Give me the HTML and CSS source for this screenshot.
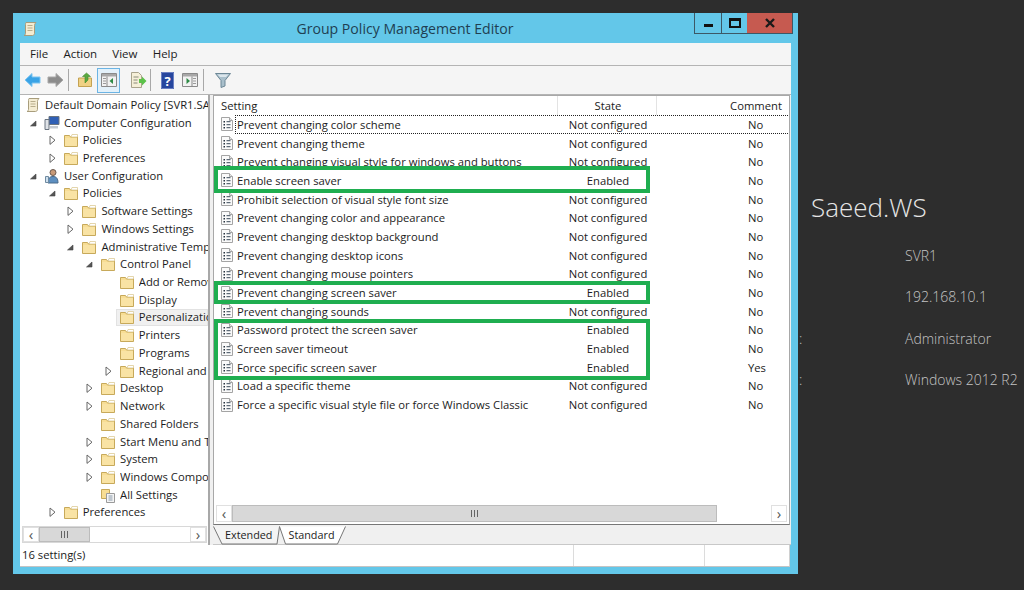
FILE: index.html
```html
<!DOCTYPE html>
<html lang="en">
<head>
    <meta charset="UTF-8">
    <meta name="viewport" content="width=device-width, initial-scale=1.0">
    <title>Group Policy Management Editor</title>
    <link rel="stylesheet" href="styles.css">
</head>
<body>
    <svg class="defs" width="0" height="0">
        <defs>
            <symbol id="folder" viewBox="0 0 16 16">
                <path d="M1.5 3.5h5l1 1.5h7v9.500h-13z" fill="#f7dd94" stroke="#c7a95a"/>
                <path d="M9 2.500h5.500v2.500H8z" fill="#fff" stroke="#d8c48a" stroke-width=".7"/>
                <path d="M2 6h12v8H2z" fill="#f9e3a4"/>
            </symbol>
            <symbol id="open" viewBox="0 0 12 12">
                <path d="M9 4v5H3.500z" fill="#555" stroke="#444" stroke-width=".6"/>
            </symbol>
            <symbol id="closed" viewBox="0 0 12 12">
                <path d="M4 2l5 4.200-5 4.200z" fill="#fff" stroke="#666"/>
            </symbol>
            <symbol id="setting" viewBox="0 0 14 16">
                <path d="M1.500 1.500h8l3 3v10h-11z" fill="#fafafa" stroke="#a4a4a4"/>
                <path d="M9.500 1.500v3h3" fill="#e4e4e4" stroke="#a4a4a4"/>
                <path d="M3.500 5h1.500v1.500H3.500zM3.500 8h1.500v1.500H3.500zM3.500 11h1.500v1.500H3.500z" fill="#26323e"/>
                <path d="M6.500 5.700h4M6.500 8.700h4M6.500 11.700h4" stroke="#3a4a5a"/>
            </symbol>
            <symbol id="scroll" viewBox="0 0 16 16">
                <path d="M4 1.500h10c-1 1-1.500 2-1.500 3v8c0 1-1 2-2 2H2c1-.5 1.500-1 1.500-2v-9c0-1 .2-1.500.5-2z" fill="#f4ecd2" stroke="#a89d7c"/>
                <path d="M5.500 4.500h5M5.500 7h5M5.500 9.500h5" stroke="#b8ad8c"/>
            </symbol>
            <symbol id="computer" viewBox="0 0 16 16">
                <path d="M5 1.500h10v8H5z" fill="#2f5fb5" stroke="#6a7480"/>
                <path d="M1 4.500h4v10H1z" fill="#dfe3e8" stroke="#6a7480"/>
                <path d="M6 11h8v2.500H6z" fill="#c4cad2"/>
            </symbol>
            <symbol id="user" viewBox="0 0 16 16">
                <circle cx="9" cy="4.500" r="3" fill="#c89a78" stroke="#6a5a50"/>
                <path d="M4 15c0-5 2-6.500 5-6.500s5 1.500 5 6.500z" fill="#5d8fc0" stroke="#4a6a8a"/>
                <path d="M1.500 8.500h3v6h-3z" fill="#cfe0ee" stroke="#6f8aa0"/>
            </symbol>
            <symbol id="allset" viewBox="0 0 16 16">
                <path d="M1.500 2.500h8v9h-8z" fill="#f7dd94" stroke="#c7a95a"/>
                <path d="M6.500 6.500h8v9h-8z" fill="#f4f4f4" stroke="#9a9a9a"/>
                <path d="M8.500 9h4M8.500 11h4M8.500 13h4" stroke="#8a9aaa"/>
            </symbol>
        </defs>
    </svg>

    <div class="desktop">
        <div class="window">
            <div class="titlebar">
                <svg class="title-icon"><use href="#scroll"/></svg>
                <div class="title">Group Policy Management Editor</div>
                <div class="controls">
                    <div class="ctl"><span class="ctl-min"></span></div>
                    <div class="ctl ctl-narrow"><span class="ctl-max"></span></div>
                    <div class="ctl ctl-close">
                        <svg width="12" height="10" viewBox="0 0 12 10"><path d="M2 1l8 8M10 1l-8 8" stroke="#1a1a1a" stroke-width="2.400"/></svg>
                    </div>
                </div>
            </div>

            <div class="menubar">
                <span>File</span>
                <span>Action</span>
                <span>View</span>
                <span>Help</span>
            </div>

            <div class="toolbar">
                <svg class="tool" width="17" height="16" viewBox="0 0 17 16"><path d="M8 1.500v3.500h8v6H8v3.500L1 8z" fill="#39a3e6" stroke="#7cc4f0"/></svg>
                <svg class="tool" width="17" height="16" viewBox="0 0 17 16"><path d="M9 1.500v3.500H1v6h8v3.500L16 8z" fill="#8c8c8c" stroke="#a8a8a8"/></svg>
                <div class="tool-sep"></div>
                <svg class="tool tool-up" width="16" height="16" viewBox="0 0 16 16">
                    <path d="M1.500 6h13v8.500h-13z" fill="#f0d184" stroke="#c4a252"/>
                    <path d="M8 11V4.500H5.500L9.500 1l4 3.500H11V8z" fill="#5aa83e" stroke="#3f8a2c" stroke-width=".6"/>
                </svg>
                <div class="tool-btn">
                    <svg width="16" height="14" viewBox="0 0 16 14">
                        <path d="M.5.500h15v13H.5z" fill="#f2f2f2" stroke="#8a8a8a"/>
                        <path d="M1 1h14v2.500H1z" fill="#a8a8a8"/>
                        <path d="M6 3.500v10" stroke="#8a8a8a"/>
                        <path d="M2 5.500h3M2 8h3M2 10.500h3" stroke="#9a9a9a"/>
                        <path d="M12 5v6L8.500 8z" fill="#2e8b46"/>
                    </svg>
                </div>
                <svg class="tool tool-doc" width="17" height="16" viewBox="0 0 17 16">
                    <path d="M1.500 .5h7l3 3v12h-10z" fill="#f5efd8" stroke="#a9a38c"/>
                    <path d="M3.500 5h5M3.500 8h4M3.500 11h4" stroke="#8a8a7a"/>
                    <path d="M9 7h3V4.500L16.500 9 12 13.500V11H9z" fill="#5cc24a"/>
                </svg>
                <div class="tool-sep"></div>
                <svg class="tool tool-help" width="13" height="17" viewBox="0 0 13 17">
                    <path d="M0 0h13v17H0z" fill="#26469e"/>
                    <path d="M.5 .5h12v16H.5z" fill="none" stroke="#6b80c2"/>
                    <text x="6.500" y="13.500" class="help-q">?</text>
                </svg>
                <svg class="tool tool-pane" width="16" height="14" viewBox="0 0 16 14">
                    <path d="M.5.500h15v13H.5z" fill="#f2f2f2" stroke="#8a8a8a"/>
                    <path d="M1 1h14v2.500H1z" fill="#a8a8a8"/>
                    <path d="M10 3.500v10" stroke="#8a8a8a"/>
                    <path d="M11 5.500h3M11 8h3M11 10.500h3" stroke="#9a9a9a"/>
                    <path d="M4.500 5v6L8 8z" fill="#2e8b46"/>
                </svg>
                <div class="tool-sep"></div>
                <svg class="tool tool-filter" width="16" height="16" viewBox="0 0 16 16">
                    <path d="M.5 1.500h15L10 8.500v5.500l-4 1.500v-7z" fill="#a9bfcb" stroke="#6d8796"/>
                    <path d="M2.500 2.500h11L11 5H5z" fill="#dbe6ec"/>
                </svg>
            </div>

            <div class="panes">
                <div class="tree-pane">
                    <div class="tree">
                        <div class="node l0"><svg class="ico"><use href="#scroll"/></svg><span>Default Domain Policy [SVR1.SAEED.WS] Policy</span></div>
                        <div class="node l1"><svg class="tw"><use href="#open"/></svg><svg class="ico"><use href="#computer"/></svg><span>Computer Configuration</span></div>
                        <div class="node l2"><svg class="tw"><use href="#closed"/></svg><svg class="ico"><use href="#folder"/></svg><span>Policies</span></div>
                        <div class="node l2"><svg class="tw"><use href="#closed"/></svg><svg class="ico"><use href="#folder"/></svg><span>Preferences</span></div>
                        <div class="node l1"><svg class="tw"><use href="#open"/></svg><svg class="ico"><use href="#user"/></svg><span>User Configuration</span></div>
                        <div class="node l2"><svg class="tw"><use href="#open"/></svg><svg class="ico"><use href="#folder"/></svg><span>Policies</span></div>
                        <div class="node l3"><svg class="tw"><use href="#closed"/></svg><svg class="ico"><use href="#folder"/></svg><span>Software Settings</span></div>
                        <div class="node l3"><svg class="tw"><use href="#closed"/></svg><svg class="ico"><use href="#folder"/></svg><span>Windows Settings</span></div>
                        <div class="node l3"><svg class="tw"><use href="#open"/></svg><svg class="ico"><use href="#folder"/></svg><span>Administrative Templates</span></div>
                        <div class="node l4"><svg class="tw"><use href="#open"/></svg><svg class="ico"><use href="#folder"/></svg><span>Control Panel</span></div>
                        <div class="node l5"><svg class="tw"></svg><svg class="ico"><use href="#folder"/></svg><span>Add or Remove Programs</span></div>
                        <div class="node l5"><svg class="tw"></svg><svg class="ico"><use href="#folder"/></svg><span>Display</span></div>
                        <div class="node l5 selected"><svg class="tw"></svg><svg class="ico"><use href="#folder"/></svg><span>Personalization</span></div>
                        <div class="node l5"><svg class="tw"></svg><svg class="ico"><use href="#folder"/></svg><span>Printers</span></div>
                        <div class="node l5"><svg class="tw"></svg><svg class="ico"><use href="#folder"/></svg><span>Programs</span></div>
                        <div class="node l5"><svg class="tw"><use href="#closed"/></svg><svg class="ico"><use href="#folder"/></svg><span>Regional and Language</span></div>
                        <div class="node l4"><svg class="tw"><use href="#closed"/></svg><svg class="ico"><use href="#folder"/></svg><span>Desktop</span></div>
                        <div class="node l4"><svg class="tw"><use href="#closed"/></svg><svg class="ico"><use href="#folder"/></svg><span>Network</span></div>
                        <div class="node l4"><svg class="tw"></svg><svg class="ico"><use href="#folder"/></svg><span>Shared Folders</span></div>
                        <div class="node l4"><svg class="tw"><use href="#closed"/></svg><svg class="ico"><use href="#folder"/></svg><span>Start Menu and Taskbar</span></div>
                        <div class="node l4"><svg class="tw"><use href="#closed"/></svg><svg class="ico"><use href="#folder"/></svg><span>System</span></div>
                        <div class="node l4"><svg class="tw"><use href="#closed"/></svg><svg class="ico"><use href="#folder"/></svg><span>Windows Components</span></div>
                        <div class="node l4"><svg class="tw"></svg><svg class="ico"><use href="#allset"/></svg><span>All Settings</span></div>
                        <div class="node l2"><svg class="tw"><use href="#closed"/></svg><svg class="ico"><use href="#folder"/></svg><span>Preferences</span></div>
                    </div>
                    <div class="hscroll tree-scroll">
                        <div class="sb-btn">&lsaquo;</div>
                        <div class="sb-thumb tree-thumb"><span class="grip"></span></div>
                        <div class="sb-track"></div>
                        <div class="sb-btn">&rsaquo;</div>
                    </div>
                </div>

                <div class="list-side">
                    <div class="list-pane">
                        <div class="list-head">
                            <div>Setting</div>
                            <div class="head-state">State</div>
                            <div class="head-comment">Comment</div>
                        </div>
                        <div class="list-rows">
                            <div class="row focused"><div class="name"><svg class="doc"><use href="#setting"/></svg><span>Prevent changing color scheme</span></div><div class="state">Not configured</div><div class="comment">No</div></div>
                            <div class="row"><div class="name"><svg class="doc"><use href="#setting"/></svg><span>Prevent changing theme</span></div><div class="state">Not configured</div><div class="comment">No</div></div>
                            <div class="row"><div class="name"><svg class="doc"><use href="#setting"/></svg><span>Prevent changing visual style for windows and buttons</span></div><div class="state">Not configured</div><div class="comment">No</div></div>
                            <div class="row"><div class="name"><svg class="doc"><use href="#setting"/></svg><span>Enable screen saver</span></div><div class="state">Enabled</div><div class="comment">No</div></div>
                            <div class="row"><div class="name"><svg class="doc"><use href="#setting"/></svg><span>Prohibit selection of visual style font size</span></div><div class="state">Not configured</div><div class="comment">No</div></div>
                            <div class="row"><div class="name"><svg class="doc"><use href="#setting"/></svg><span>Prevent changing color and appearance</span></div><div class="state">Not configured</div><div class="comment">No</div></div>
                            <div class="row"><div class="name"><svg class="doc"><use href="#setting"/></svg><span>Prevent changing desktop background</span></div><div class="state">Not configured</div><div class="comment">No</div></div>
                            <div class="row"><div class="name"><svg class="doc"><use href="#setting"/></svg><span>Prevent changing desktop icons</span></div><div class="state">Not configured</div><div class="comment">No</div></div>
                            <div class="row"><div class="name"><svg class="doc"><use href="#setting"/></svg><span>Prevent changing mouse pointers</span></div><div class="state">Not configured</div><div class="comment">No</div></div>
                            <div class="row"><div class="name"><svg class="doc"><use href="#setting"/></svg><span>Prevent changing screen saver</span></div><div class="state">Enabled</div><div class="comment">No</div></div>
                            <div class="row"><div class="name"><svg class="doc"><use href="#setting"/></svg><span>Prevent changing sounds</span></div><div class="state">Not configured</div><div class="comment">No</div></div>
                            <div class="row"><div class="name"><svg class="doc"><use href="#setting"/></svg><span>Password protect the screen saver</span></div><div class="state">Enabled</div><div class="comment">No</div></div>
                            <div class="row"><div class="name"><svg class="doc"><use href="#setting"/></svg><span>Screen saver timeout</span></div><div class="state">Enabled</div><div class="comment">No</div></div>
                            <div class="row"><div class="name"><svg class="doc"><use href="#setting"/></svg><span>Force specific screen saver</span></div><div class="state">Enabled</div><div class="comment">Yes</div></div>
                            <div class="row"><div class="name"><svg class="doc"><use href="#setting"/></svg><span>Load a specific theme</span></div><div class="state">Not configured</div><div class="comment">No</div></div>
                            <div class="row"><div class="name"><svg class="doc"><use href="#setting"/></svg><span>Force a specific visual style file or force Windows Classic</span></div><div class="state">Not configured</div><div class="comment">No</div></div>
                        </div>
                        <div class="hscroll list-scroll">
                            <div class="sb-btn">&lsaquo;</div>
                            <div class="sb-thumb list-thumb"><span class="grip"></span></div>
                            <div class="sb-track"></div>
                            <div class="sb-btn">&rsaquo;</div>
                        </div>
                    </div>
                    <div class="tabs">
                        <svg class="tab-shapes" width="140" height="20" viewBox="0 0 140 20">
                            <path d="M.5 1.500l8.500 17.500h55l2.500-17.500" fill="#f4f4f4" stroke="#777"/>
                            <path d="M66.500 1.500l6 17.500h52l8-17.500" fill="#fff" stroke="#777"/>
                        </svg>
                        <div class="tab">Extended</div>
                        <div class="tab">Standard</div>
                    </div>
                    <!-- highlights drawn on top of the list -->
                    <div class="mark mark-a"></div>
                    <div class="mark mark-b"></div>
                    <div class="mark mark-c"></div>
                </div>
            </div>

            <div class="statusbar">
                <div class="status-main">16 setting(s)</div>
                <div class="status-mid"></div>
                <div class="status-end"></div>
            </div>
        </div>

        <div class="info">
            <div class="info-name">Saeed.WS</div>
            <div class="info-row"><span></span><span>SVR1</span></div>
            <div class="info-row"><span></span><span>192.168.10.1</span></div>
            <div class="info-row"><span>:</span><span>Administrator</span></div>
            <div class="info-row"><span>:</span><span>Windows 2012 R2</span></div>
        </div>
    </div>
</body>
</html>
```

FILE: styles.css
```css
* {
    box-sizing: border-box;
}

html, body {
    height: 100%;
}

body {
    margin: 0;
    background-color: #2d2d2d;
    font-family: "Open Sans", "Noto Sans", sans-serif;
    font-size: 11.25px;
    color: #1c1c1c;
    overflow: hidden;
}

.defs {
    position: absolute;
}

.desktop {
    display: flex;
    padding: 13px 0 0 13px;
}

/* Window frame */
.window {
    display: flex;
    flex-direction: column;
    flex: none;
    width: 785px;
    height: 561px;
    padding: 0 7px 7px;
    background-color: #63c7e9;
}

.titlebar {
    display: grid;
    grid-template-columns: 1fr auto 1fr;
    height: 30px;
    flex: none;
}

.title-icon {
    width: 16px;
    height: 16px;
    margin: 8px 0 0 2px;
}

.title {
    padding: 6px 1px 0 0;
    font-size: 14.1px;
    color: #1f3f52;
}

.controls {
    display: flex;
    justify-self: end;
    height: 21px;
    margin-right: -2px;
    border: 1px solid #3c5866;
    border-top: none;
}

.ctl {
    display: flex;
    align-items: center;
    justify-content: center;
    width: 27px;
    border-right: 1px solid #3c5866;
}

.ctl-narrow {
    width: 25px;
    border-right: none;
}

.ctl-close {
    width: 45px;
    background-color: #c65a50;
    border-right: none;
}

.ctl-min {
    width: 9px;
    height: 3px;
    margin-top: 5px;
    background-color: #111;
}

.ctl-max {
    width: 12px;
    height: 10px;
    border: 2px solid #111;
    border-top-width: 3px;
}

.menubar {
    display: flex;
    flex: none;
    gap: 15.2px;
    align-items: center;
    height: 23px;
    padding: 0 0 2px 10px;
    font-size: 11.5px;
    background-color: #f5f5f5;
    border-bottom: 1px solid #b4b4b4;
}

.toolbar {
    display: flex;
    flex: none;
    align-items: center;
    height: 29px;
    padding-left: 4px;
    background-color: #f5f5f5;
    border-bottom: 1px solid #b4b4b4;
}

.tool {
    flex: none;
    margin-right: 6px;
}

.tool-sep {
    width: 1px;
    height: 22px;
    margin: 0 10px 0 -2px;
    background-color: #a8a8a8;
}

.tool-up {
    margin-left: -2px;
}

.tool-btn {
    display: flex;
    align-items: center;
    justify-content: center;
    width: 23px;
    height: 25px;
    margin: 0 10px 0 -2px;
    background-color: #e3f1fa;
    border: 1px solid #6cb4e4;
}

.tool-doc {
    margin-right: 5px;
}

.tool-help {
    margin-right: 8px;
}

.tool-pane {
    margin-right: 7px;
}

.tool-filter {
    margin-left: 1px;
}

.help-q {
    fill: #fff;
    font-size: 13px;
    font-weight: 700;
    text-anchor: middle;
}

/* Panes */
.panes {
    display: flex;
    flex: 1;
    min-height: 0;
    gap: 3px;
    background-color: #f0f0f0;
}

.tree-pane {
    display: flex;
    flex-direction: column;
    flex: none;
    width: 190px;
    background-color: #fff;
    border-right: 2px solid #a8a8a8;
}

.tree {
    flex: 1;
    min-height: 0;
    padding-top: 1px;
    overflow: hidden;
}

.node {
    display: flex;
    align-items: center;
    height: 17.73px;
    white-space: nowrap;
}

.node span {
    flex: 1;
    min-width: 0;
    margin: 0 0 1px 4px;
    overflow: hidden;
}

.l0 { padding-left: 5px; }
.l1 { padding-left: 7px; }
.l2 { padding-left: 25.7px; }
.l3 { padding-left: 44.4px; }
.l4 { padding-left: 63.1px; }
.l5 { padding-left: 81.8px; }

.tw {
    flex: none;
    width: 12px;
    height: 12px;
    margin-right: 5px;
}

.ico {
    flex: none;
    width: 16px;
    height: 16px;
}

.selected {
    position: relative;
}

/* selected row only paints from its icon on */
.selected::before {
    content: "";
    position: absolute;
    top: 0;
    bottom: 0;
    left: 96px;
    right: 0;
    background-color: #f0f0f0;
    border: 1px solid #e2e2e2;
}

.selected svg,
.selected span {
    position: relative;
}

/* Scrollbars */
.hscroll {
    display: flex;
    flex: none;
    background-color: #fff;
}

.tree-scroll {
    height: 17px;
    margin: 0 1px 2px 2px;
    border: 1px solid #d8d8d8;
}

.list-scroll {
    height: 17px;
    margin: 0 2px 2px 2px;
}

.sb-btn {
    display: flex;
    align-items: center;
    justify-content: center;
    width: 16px;
    font-size: 15px;
    line-height: 1;
    color: #555;
    background-color: #fff;
    border: 1px solid #e0e0e0;
}

.sb-thumb {
    display: flex;
    align-items: center;
    justify-content: center;
    background-color: #d8d8d8;
    border: 1px solid #bcbcbc;
}

.tree-thumb {
    width: 51px;
}

.list-thumb {
    width: 485px;
}

.sb-track {
    flex: 1;
}

.grip {
    width: 7px;
    height: 7px;
    background: repeating-linear-gradient(90deg, #666 0 1px, transparent 1px 3px);
}

/* Settings list */
.list-side {
    position: relative;
    display: flex;
    flex-direction: column;
    flex: 1;
}

.list-pane {
    display: flex;
    flex-direction: column;
    flex: 1;
    min-height: 0;
    margin-right: 1px;
    background-color: #fff;
    border: 1px solid #a8a8a8;
    border-bottom-color: #777;
}

.list-head {
    display: grid;
    grid-template-columns: 344px 99px 1fr;
    flex: none;
    height: 19px;
    line-height: 19px;
}

.list-head > div {
    padding-left: 7px;
    border-right: 1px solid #e3e3e3;
}

.list-head .head-state {
    padding-left: 2px;
    text-align: center;
}

.list-head .head-comment {
    padding-right: 7px;
    text-align: right;
    border-right: none;
}

.list-rows {
    flex: 1;
    min-height: 0;
    overflow: hidden;
}

.row {
    display: grid;
    grid-template-columns: 344px 99px 1fr;
    align-items: center;
    height: 18.69px;
    white-space: nowrap;
}

.name {
    display: flex;
    align-items: center;
    padding-left: 6px;
}

.name span {
    margin-left: 3px;
}

.doc {
    flex: none;
    width: 14px;
    height: 16px;
}

.state {
    padding-left: 1px;
    text-align: center;
}

.comment {
    padding-left: 91px;
}

.focused {
    position: relative;
}

.focused::after {
    content: "";
    position: absolute;
    top: 0;
    bottom: 0;
    left: 21px;
    right: 1px;
    border-top: 1px dotted #222;
    border-bottom: 1px dotted #222;
    border-left: 1px dotted #222;
}

.tabs {
    position: relative;
    display: flex;
    flex: none;
    gap: 16px;
    height: 20px;
    padding-left: 12px;
    background-color: #f0f0f0;
    border-bottom: 1px solid #c8c8c8;
}

.tab-shapes {
    position: absolute;
    top: 0;
    left: 0;
}

.tab {
    position: relative;
    font-size: 10.8px;
    line-height: 20px;
}

/* Green highlight boxes */
.mark {
    position: absolute;
    left: 1px;
    width: 436px;
    border: 4px solid #1fae50;
}

.mark-a {
    top: 71px;
    height: 27px;
}

.mark-b {
    top: 186px;
    height: 23px;
}

.mark-c {
    top: 224px;
    height: 61px;
}

.statusbar {
    display: flex;
    flex: none;
    height: 22px;
    margin-right: 1px;
    background-color: #fff;
    border-bottom: 1px solid #c4c4c4;
    border-right: 1px solid #d0d0d0;
}

.status-main {
    width: 554px;
    padding-left: 2px;
    line-height: 20px;
    white-space: nowrap;
    border-right: 1px solid #dcdcdc;
}

.status-mid {
    width: 131px;
    border-right: 1px solid #dcdcdc;
}

.status-end {
    flex: 1;
}

/* Desktop text on the right */
.info {
    display: flex;
    flex-direction: column;
    flex: 1;
    padding-top: 177px;
    font-weight: 300;
    font-size: 14px;
    color: #c4c4c4;
}

.info-name {
    margin: 0 0 11px 13px;
    font-size: 26px;
    line-height: 34px;
    color: #e6e6e6;
}

.info-row {
    display: grid;
    grid-template-columns: 106px 1fr;
    height: 41.3px;
    line-height: 41.3px;
    padding-left: 1px;
    white-space: nowrap;
}
```
